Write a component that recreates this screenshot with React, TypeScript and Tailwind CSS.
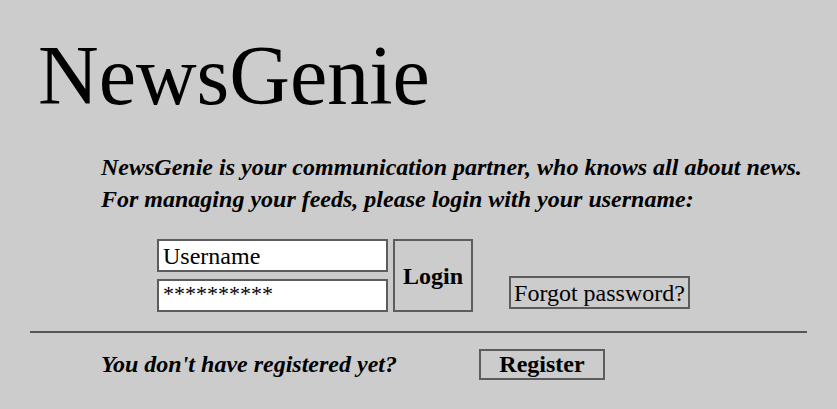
export default function App() {
	return (
		<div className="w-[837px] h-[409px] bg-[#cccccc] overflow-hidden font-['Liberation_Serif',serif] text-black">
			<h1 className="pl-[38px] pt-[34px] text-[84px] leading-none">NewsGenie</h1>
			<div className="pl-[101px] pt-[33px] flex-col font-bold italic text-[24px] leading-[32px]">
				<p>NewsGenie is your communication partner, who knows all about news.</p>
				<p>For managing your feeds, please login with your username:</p>
			</div>
			<div className="flex items-start pl-[157px] pt-[24px]">
				<div className="flex flex-col gap-[7px]">
					<input
						className="w-[231px] h-[33px] bg-white border-2 border-[#5c5c5c] px-[4px] text-[24px] outline-none"
						defaultValue="Username"
					/>
					<input
						className="w-[231px] h-[33px] bg-white border-2 border-[#5c5c5c] px-[4px] pb-[4px] text-[22px] outline-none"
						type="text"
						defaultValue="**********"
					/>
				</div>
				<button className="ml-[5px] w-[80px] h-[73px] border-2 border-[#5c5c5c] font-bold text-[24px]">
					Login
				</button>
				<button className="ml-[36px] mt-[37px] w-[181px] h-[33px] border-2 border-[#5c5c5c] text-[24px] leading-none">
					Forgot password?
				</button>
			</div>
			<div className="mx-[30px] mt-[19px] h-[2px] bg-[#555555]" />
			<div className="flex items-center pl-[101px] pt-[13px]">
				<span className="font-bold italic text-[24px] w-[378px]">You don't have registered yet?</span>
				<button className="w-[126px] h-[31px] border-2 border-[#5c5c5c] font-bold text-[24px] leading-none">
					Register
				</button>
			</div>
		</div>
	);
}
